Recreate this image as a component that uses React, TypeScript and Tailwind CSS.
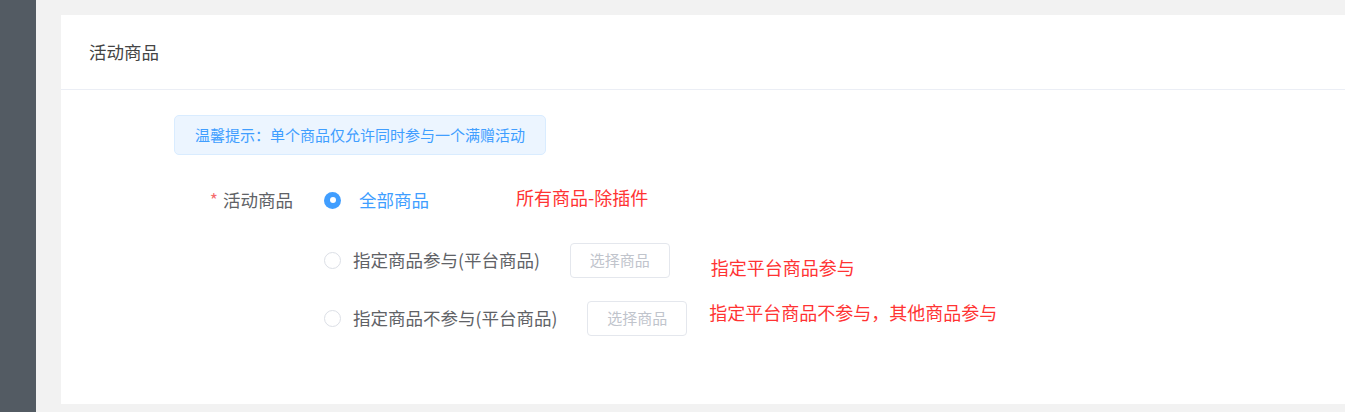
import { useState } from 'react';

type Option = { id: string; label: string; hasButton: boolean; note: string };

const options: Option[] = [
  { id: 'all', label: '全部商品', hasButton: false, note: '所有商品-除插件' },
  { id: 'include', label: '指定商品参与(平台商品)', hasButton: true, note: '指定平台商品参与' },
  { id: 'exclude', label: '指定商品不参与(平台商品)', hasButton: true, note: '指定平台商品不参与，其他商品参与' },
];

function Radio({ checked }: { checked: boolean }) {
  return checked ? (
    <span className="flex h-[17px] w-[17px] items-center justify-center rounded-full bg-[#409eff]">
      <span className="h-[6px] w-[6px] rounded-full bg-white" />
    </span>
  ) : (
    <span className="h-[17px] w-[17px] rounded-full border border-[#dcdfe6] bg-white" />
  );
}

export default function App() {
  const [value, setValue] = useState('all');

  return (
    <div
      className="flex h-[412px] w-full overflow-hidden bg-[#f2f2f2]"
      style={{ fontFamily: '"Noto Sans CJK SC", "Noto Sans", sans-serif' }}
    >
      <aside className="w-[36px] shrink-0 bg-[#535b63]" />

      <main className="flex-1 pl-[25px] pt-[15px]">
        <div className="h-[389px] bg-white">
          <div className="flex h-[75px] items-center border-b border-[#ebeef5] px-[28px] text-[17.5px] text-[#444]">
            活动商品
          </div>

          <div className="pl-[113px] pt-[25px]">
            <div className="inline-flex h-[40px] w-[372px] items-center rounded-[5px] border border-[#d9ecff] bg-[#ecf5ff] px-[20px] text-[15px] text-[#409eff]">
              温馨提示：单个商品仅允许同时参与一个满赠活动
            </div>

            <div className="mt-[27px] flex">
              <div className="flex h-[36px] w-[150px] items-center justify-end pr-[31px] text-[17.5px] text-[#606266]">
                <span className="mr-[5px] text-[#f56c6c]">*</span>
                活动商品
              </div>

              <div className="flex flex-col">
                {options.map((o, i) => {
                  const checked = value === o.id;
                  return (
                    <div
                      key={o.id}
                      className={`flex items-center ${i === 0 ? 'h-[36px]' : i === 1 ? 'mt-[24px] h-[36px]' : 'mt-[22px] h-[36px]'}`}
                    >
                      <button
                        onClick={() => setValue(o.id)}
                        className={`flex items-center text-[17.5px] ${checked ? 'text-[#409eff]' : 'text-[#606266]'}`}
                      >
                        <Radio checked={checked} />
                        <span className={i === 0 ? 'ml-[18px]' : 'ml-[12px]'}>{o.label}</span>
                      </button>
                      {o.hasButton && (
                        <span className="ml-[30px] flex h-[35px] w-[100px] items-center justify-center rounded-[4px] border border-[#e4e7ed] bg-white text-[15px] text-[#c0c4cc]">
                          选择商品
                        </span>
                      )}
                      <span
                        className={`text-[18px] text-[#ff3333] ${
                          i === 0 ? 'ml-[87px] -mt-[6px]' : i === 1 ? 'ml-[41px] mt-[14px]' : 'ml-[22px] -mt-[12px]'
                        }`}
                      >
                        {o.note}
                      </span>
                    </div>
                  );
                })}
              </div>
            </div>
          </div>
        </div>
      </main>
    </div>
  );
}
